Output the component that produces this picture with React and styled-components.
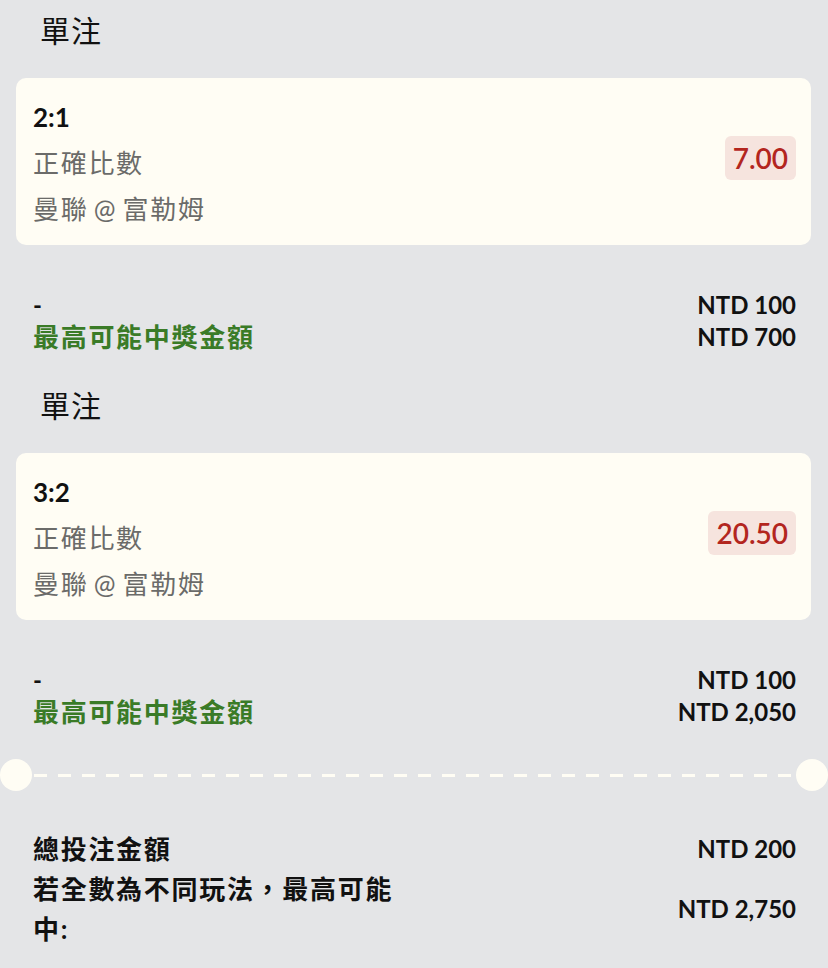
import React from 'react';
import styled, { createGlobalStyle } from 'styled-components';

const GlobalStyle = createGlobalStyle`
  body {
    margin: 0;
    background: #e4e5e7;
    font-family: Lato, "Noto Sans CJK TC", sans-serif;
    color: #111;
  }
`;

const Page = styled.div`
  padding: 8px 17px 0 16px;
  box-sizing: border-box;
  width: 828px;
`;

const Title = styled.h2`
  margin: 0 0 26px 24px;
  font-size: 30px;
  font-weight: 400;
  line-height: 44px;
  letter-spacing: 1px;
`;

const Card = styled.div`
  display: flex;
  align-items: center;
  justify-content: space-between;
  background: #fffdf4;
  border-radius: 10px;
  padding: 16px 15px 13px 17px;
`;

const Info = styled.div`
  display: flex;
  flex-direction: column;
`;

const Score = styled.div`
  font-size: 26px;
  font-weight: 700;
  line-height: 46px;
`;

const Meta = styled.div`
  font-size: 26px;
  line-height: 46px;
  color: #6b6b69;
  letter-spacing: 1.7px;
  word-spacing: -3px;
`;

const Odds = styled.div`
  background: #f6e4de;
  color: #b3261e;
  border-radius: 6px;
  font-size: 28px;
  font-weight: 600;
  line-height: 44px;
  padding: 0 8px;
  margin-top: -11px;
`;

const Summary = styled.div`
  padding: 44px 15px 30px 17px;
`;

const Row = styled.div`
  display: flex;
  align-items: center;
  justify-content: space-between;
  line-height: ${p => p.$lh || 32}px;
`;

const Label = styled.span`
  font-size: ${p => (p.$cjk ? 26 : 24)}px;
  font-weight: 700;
  letter-spacing: ${p => (p.$cjk ? 1.7 : 0)}px;
  color: ${p => (p.$green ? '#3a7b27' : '#111')};
  max-width: 382px;
`;

const Amount = styled.span`
  font-size: 24px;
  font-weight: 700;
`;

const Divider = styled.div`
  display: flex;
  align-items: center;
  margin: 1px -17px 0 -16px;
`;

const Dot = styled.span`
  flex: none;
  width: 32px;
  height: 32px;
  border-radius: 50%;
  background: #fffdf4;
`;

const Dashes = styled.span`
  flex: 1;
  height: 3px;
  margin: 0 -1px;
  background: repeating-linear-gradient(
    90deg,
    transparent 0 3px,
    #fffdf4 3px 16px,
    transparent 16px 24px
  );
`;

const Totals = styled.div`
  padding: 38px 15px 20px 17px;
  display: flex;
  flex-direction: column;
`;

const bets = [
  { score: '2:1', odds: '7.00', stake: 'NTD 100', win: 'NTD 700' },
  { score: '3:2', odds: '20.50', stake: 'NTD 100', win: 'NTD 2,050' },
];

const App = () => (
  <>
    <GlobalStyle />
    <Page>
      {bets.map(bet => (
        <section key={bet.score}>
          <Title>單注</Title>
          <Card>
            <Info>
              <Score>{bet.score}</Score>
              <Meta>正確比數</Meta>
              <Meta>曼聯 @ 富勒姆</Meta>
            </Info>
            <Odds>{bet.odds}</Odds>
          </Card>
          <Summary>
            <Row>
              <Label>-</Label>
              <Amount>{bet.stake}</Amount>
            </Row>
            <Row>
              <Label $cjk $green>最高可能中獎金額</Label>
              <Amount>{bet.win}</Amount>
            </Row>
          </Summary>
        </section>
      ))}
      <Divider>
        <Dot />
        <Dashes />
        <Dot />
      </Divider>
      <Totals>
        <Row $lh={40}>
          <Label $cjk>總投注金額</Label>
          <Amount>NTD 200</Amount>
        </Row>
        <Row $lh={40}>
          <Label $cjk>若全數為不同玩法，最高可能中:</Label>
          <Amount>NTD 2,750</Amount>
        </Row>
      </Totals>
    </Page>
  </>
);

export default App;
